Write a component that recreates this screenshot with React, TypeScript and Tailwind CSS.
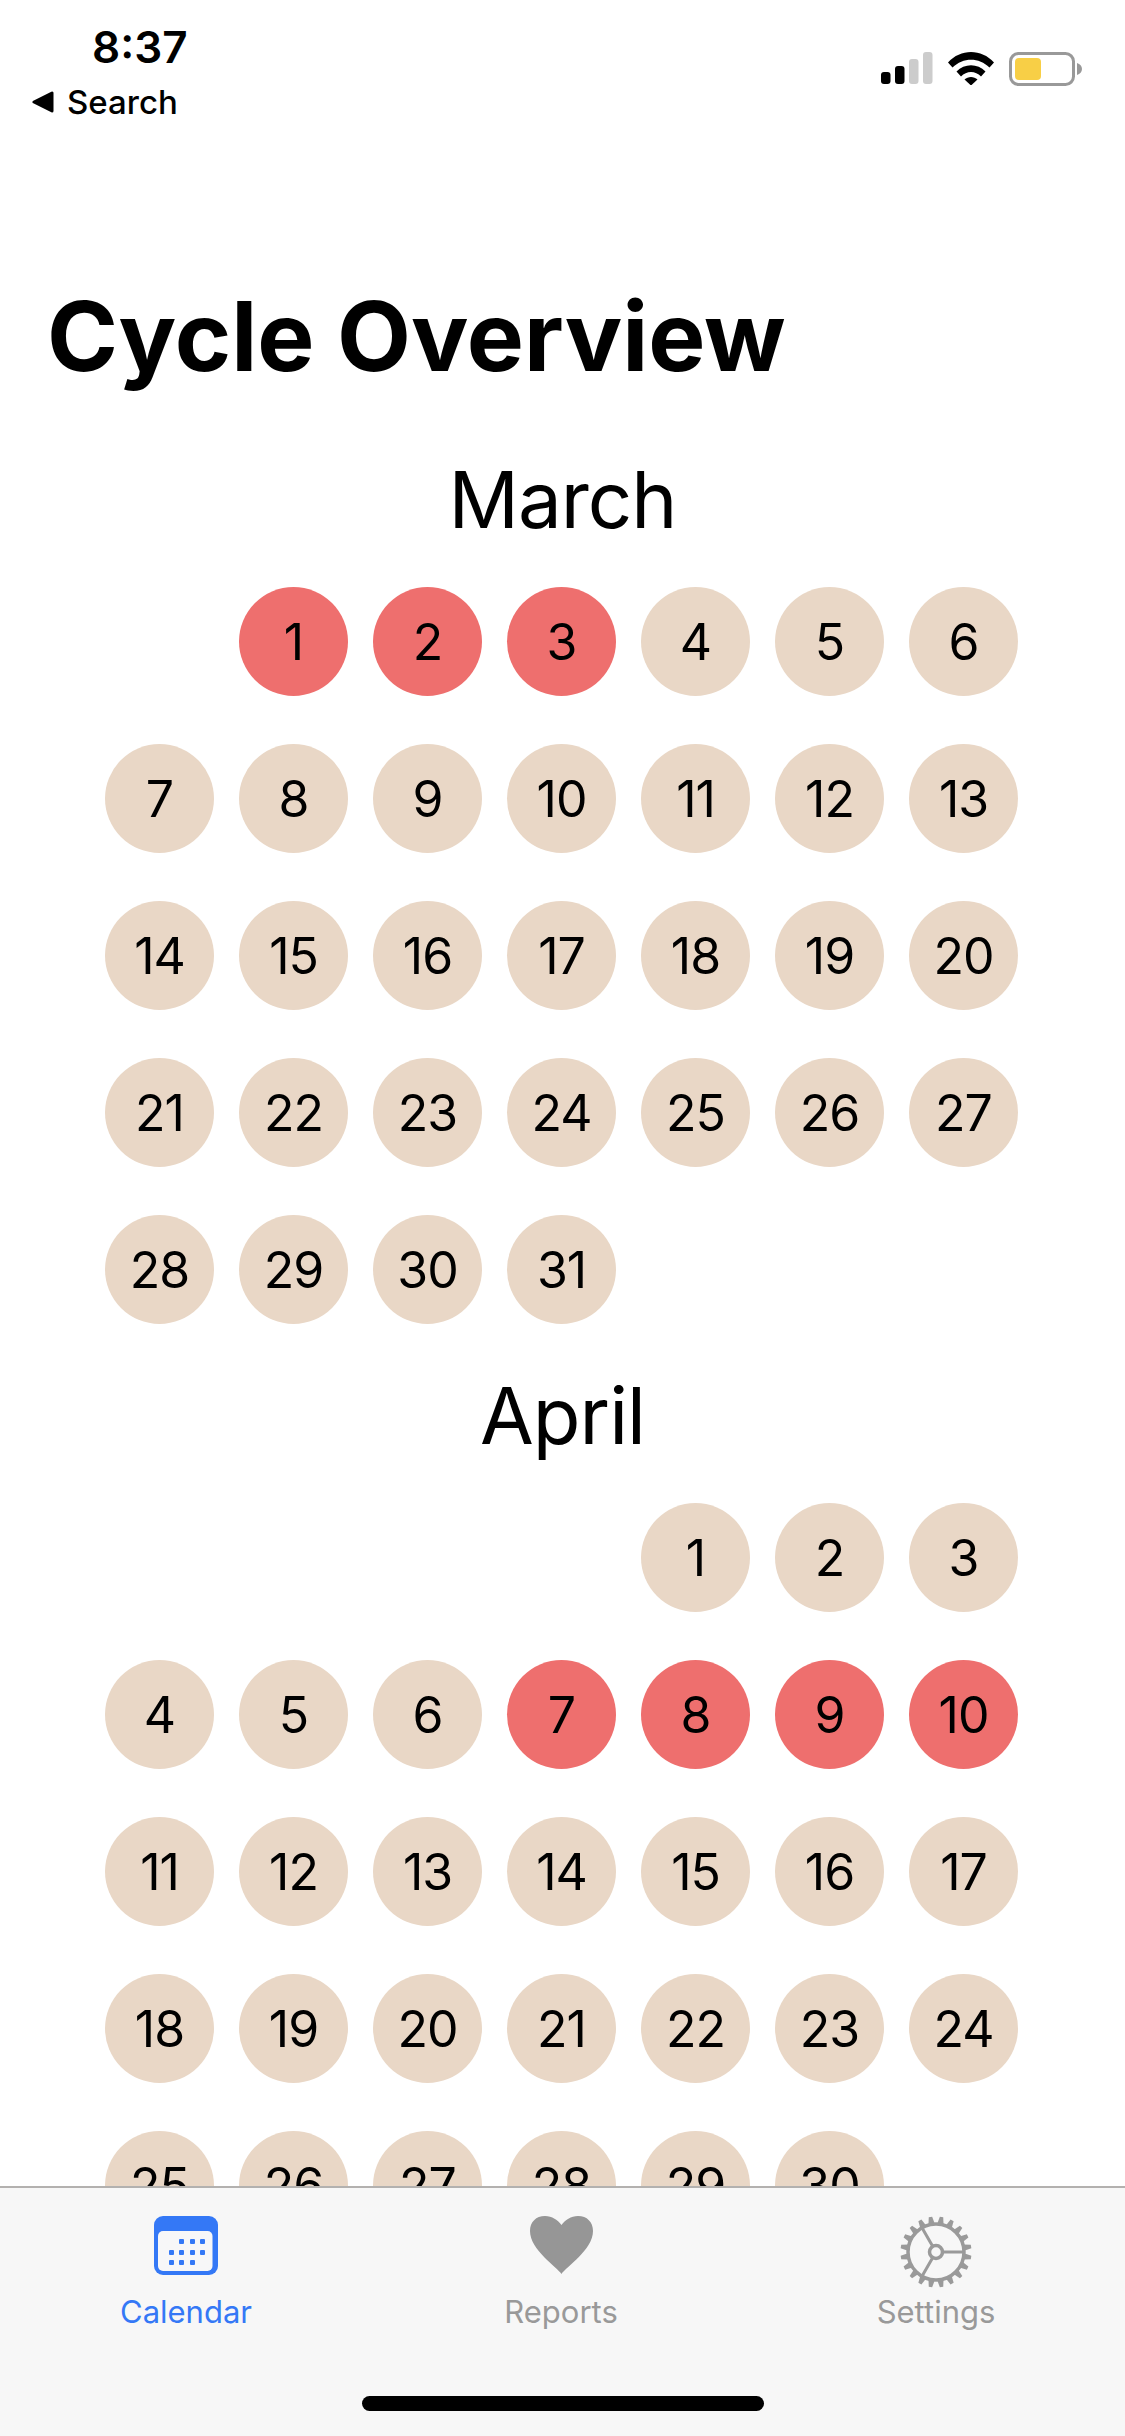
import React from 'react';

const marchDays = Array.from({ length: 31 }, (_, i) => i + 1);
const aprilDays = Array.from({ length: 30 }, (_, i) => i + 1);

const font = { fontFamily: 'Inter, sans-serif' };

const DayCircle = ({ day, red }: { day: number; red: boolean }) => (
  <div
    className={`w-[109px] h-[109px] rounded-full flex items-center justify-center pt-[2px] text-[50px] font-normal tracking-[-1px] text-black ${
      red ? 'bg-[#ee6f6e]' : 'bg-[#e9d7c6]'
    }`}
  >
    {day}
  </div>
);

const Month = ({ name, days, offset, red }: { name: string; days: number[]; offset: number; red: number[] }) => (
  <div>
    <h2 className="h-[78px] flex items-center justify-center text-[78px] font-normal tracking-[-1px] text-black leading-none">
      {name}
    </h2>
    <div className="grid grid-cols-[repeat(7,109px)] gap-x-[25px] gap-y-[48px] pl-[105px] mt-[48px]">
      {Array.from({ length: offset }, (_, i) => (
        <div key={i} />
      ))}
      {days.map((d) => (
        <DayCircle key={d} day={d} red={red.includes(d)} />
      ))}
    </div>
  </div>
);

const SignalIcon = () => (
  <svg width="52" height="33" viewBox="0 0 52 33">
    <rect x="0" y="20" width="9.500" height="12" rx="3" fill="#000" />
    <rect x="14" y="14" width="9.500" height="18" rx="3" fill="#000" />
    <rect x="28" y="7" width="9.500" height="25" rx="3" fill="#ccc" />
    <rect x="42" y="0" width="9.500" height="32" rx="3" fill="#ccc" />
  </svg>
);

const WifiIcon = () => (
  <svg width="46" height="33" viewBox="0 0 46 33">
    <path d="M0 10.500C12.500 -3.500 33.500 -3.500 46 10.500L41.500 15.500C31 5 15 5 4.500 15.500Z" fill="#000" />
    <path d="M8.500 19.500C16.500 11 29.500 11 37.500 19.500L33 24.500C27.500 18.500 18.500 18.500 13 24.500Z" fill="#000" />
    <path d="M16.500 27.500C20 24 26 24 29.500 27.500L23 33.500Z" fill="#000" />
  </svg>
);

const BatteryIcon = () => (
  <svg width="73" height="34" viewBox="0 0 73 34">
    <rect x="1.500" y="1.500" width="63" height="31" rx="8" fill="none" stroke="#999" strokeWidth="3" />
    <rect x="6" y="6" width="26" height="22" rx="4" fill="#f8cf46" />
    <path d="M68 11C71 12 73 14 73 17C73 20 71 22 68 23Z" fill="#999" />
  </svg>
);

const CalendarIcon = () => {
  const dots = [
    [25, 23], [36, 23], [46, 23],
    [15, 34], [25, 34], [36, 34], [46, 34],
    [15, 44], [25, 44], [36, 44],
  ];
  return (
    <svg width="64" height="59" viewBox="0 0 64 59">
      <rect x="0" y="0" width="64" height="59" rx="9" fill="#3478f6" />
      <rect x="4" y="15" width="54.500" height="40" rx="5" fill="#f7f7f8" />
      {dots.map(([x, y]) => (
        <rect key={`${x}-${y}`} x={x} y={y} width="5" height="5" rx="1" fill="#3478f6" />
      ))}
    </svg>
  );
};

const HeartIcon = () => (
  <svg width="63" height="58" viewBox="0 0 63 58">
    <path
      d="M31.500 58C27 51 0 34 0 15C0 6 6 0 15 0C22 0 28 4 31.500 9C35 4 41 0 48 0C57 0 63 6 63 15C63 34 36 51 31.500 58Z"
      fill="#969696"
    />
  </svg>
);

const GearIcon = () => {
  const teeth = Array.from({ length: 20 }, (_, i) => i * 18 + 9);
  return (
    <svg width="72" height="72" viewBox="-36 -36 72 72">
      {teeth.map((a) => (
        <path key={a} d="M-3.200 -28L-1.700 -35.500H1.700L3.200 -28Z" fill="#9a9a9a" transform={`rotate(${a})`} />
      ))}
      <circle cx="0" cy="0" r="28" fill="none" stroke="#9a9a9a" strokeWidth="3.500" />
      <path d="M7 0H28M-3.500 -6L-14 -24.200M-3.500 6L-14 24.200" stroke="#9a9a9a" strokeWidth="3" />
      <circle cx="0" cy="0" r="6.500" fill="none" stroke="#9a9a9a" strokeWidth="3.500" />
    </svg>
  );
};

const TabItem = ({
  icon,
  label,
  className,
}: {
  icon: React.ReactNode;
  label: string;
  className: string;
}) => (
  <div className="flex flex-col items-center w-[200px]">
    <div className="h-[78px] flex items-start">{icon}</div>
    <span className={`text-[31px] leading-[36px] ${className}`}>{label}</span>
  </div>
);

const App: React.FC = () => {
  return (
    <div className="w-[1125px] h-[2436px] bg-white flex flex-col overflow-hidden" style={font}>
      <div className="h-[2186px] overflow-hidden">
        {/* status bar */}
        <div className="h-[130px] flex justify-between pl-[32px] pr-[43px] pt-[23px]">
          <div>
            <div className="text-[44px] leading-[48px] font-semibold text-black pl-[60px]">8:37</div>
            <div className="flex items-center gap-[13px] mt-[11px]">
              <svg width="22" height="22" viewBox="0 0 22 22">
                <path d="M2 11L20 2V20Z" fill="#000" stroke="#000" strokeWidth="3" strokeLinejoin="round" />
              </svg>
              <span className="text-[33px] leading-[40px] font-medium text-black">Search</span>
            </div>
          </div>
          <div className="flex items-start gap-[15px] pt-[29px]">
            <SignalIcon />
            <WifiIcon />
            <BatteryIcon />
          </div>
        </div>

        <h1 className="text-[96px] leading-[116px] font-bold text-black pl-[47px] mt-[148px]">Cycle Overview</h1>

        <div className="mt-[67px] flex flex-col gap-[53px]">
          <Month name="March" days={marchDays} offset={1} red={[1, 2, 3]} />
          <Month name="April" days={aprilDays} offset={4} red={[7, 8, 9, 10]} />
        </div>
      </div>

      {/* tab bar */}
      <div className="flex-1 bg-[#f7f7f7] border-t-2 border-[#b3b1af] flex flex-col items-center">
        <div className="w-full flex justify-between pl-[86px] pr-[89px] pt-[28px]">
          <TabItem icon={<CalendarIcon />} label="Calendar" className="text-[#3478f6]" />
          <TabItem icon={<HeartIcon />} label="Reports" className="text-[#999999]" />
          <TabItem icon={<GearIcon />} label="Settings" className="text-[#999999]" />
        </div>
        <div className="w-[402px] h-[15px] rounded-full bg-black mt-[66px]" />
      </div>
    </div>
  );
};

export default App;
